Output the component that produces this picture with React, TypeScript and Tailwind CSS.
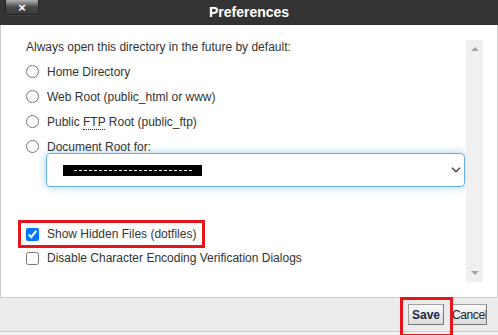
import { ChevronDown } from "lucide-react";

const font = { fontFamily: '"Liberation Sans", Arial, sans-serif' };

const RadioRow = ({ label, className = "h-[25px]" }: { label: React.ReactNode; className?: string }) => (
  <label className={`flex items-center gap-[8px] ${className}`}>
    <input type="radio" name="dir" className="w-[13px] h-[13px]" />
    <span>{label}</span>
  </label>
);

export default function App() {
  return (
    <div
      className="w-[498px] h-[335px] overflow-hidden bg-[#f2f2f2] text-[12px] text-[#333]"
      style={font}
    >
      {/* Title bar */}
      <div className="relative h-[25px] bg-[#333333] flex items-center justify-center">
        <button className="absolute left-[5px] top-0 w-[34px] h-[15px] rounded-b-[4px] border border-t-0 border-[#222] bg-gradient-to-b from-[#b4b4b4] via-[#4a4a4a] to-[#3a3a3a] flex items-center justify-center text-white font-bold text-[13px] leading-none shadow-[0_1px_0_#444]">
          ×
        </button>
        <div className="text-white font-bold text-[14px]">Preferences</div>
      </div>

      {/* Body */}
      <div className="h-[272px] bg-white flex border-l border-r border-[#cccccc]">
        <div className="flex-1 pl-[25px] pt-[10px]">
          <div className="h-[24px] flex items-center">Always open this directory in the future by default:</div>
          <RadioRow label="Home Directory" />
          <RadioRow label="Web Root (public_html or www)" />
          <RadioRow
            label={
              <>
                Public{" "}
                <abbr className="no-underline border-b border-dotted border-[#333]">FTP</abbr> Root (public_ftp)
              </>
            }
          />
          <RadioRow label="Document Root for:" className="h-[19px] pt-[6px]" />

          <div className="ml-[20px] mr-[1px] h-[34px] rounded-[4px] border border-[#66afe9] shadow-[0_0_8px_rgba(102,175,233,0.6)] flex items-center justify-between pl-[16px] pr-[1px]">
            <div className="w-[139px] h-[11px] bg-black flex items-center justify-center">
              <div className="w-[118px] border-t border-dashed border-white" />
            </div>
            <ChevronDown className="w-[14px] h-[14px] text-[#555]" strokeWidth={3} />
          </div>

          <label className="relative mt-[35px] h-[24px] flex items-center gap-[8px]">
            <input type="checkbox" defaultChecked className="w-[13px] h-[13px]" />
            <span>Show Hidden Files (dotfiles)</span>
            <span className="absolute left-[-8px] top-[-2px] w-[187px] h-[28px] border-[3px] border-[#e8141c]" />
          </label>
          <label className="h-[24px] flex items-center gap-[8px]">
            <input type="checkbox" className="w-[13px] h-[13px]" />
            <span>Disable Character Encoding Verification Dialogs</span>
          </label>
        </div>

        {/* Scrollbar */}
        <div className="w-[17px] mt-[15px] mb-[15px] bg-[#f0f0f0] flex flex-col items-center justify-between py-[7px]">
          <div className="w-0 h-0 border-l-[4px] border-r-[4px] border-b-[4px] border-l-transparent border-r-transparent border-b-[#a3a3a3]" />
          <div className="w-0 h-0 border-l-[4px] border-r-[4px] border-t-[4px] border-l-transparent border-r-transparent border-t-[#a3a3a3]" />
        </div>
        <div className="w-[14px]" />
      </div>

      {/* Footer */}
      <div className="h-[35px] bg-[#ececec] border-t border-b border-[#cccccc] flex items-center justify-end gap-[8px] pr-[11px]">
        <button className="relative w-[36px] h-[21px] border border-[#a0a0a0] border-r-[#777] border-b-[#777] bg-gradient-to-b from-[#fafafa] to-[#dcdcdc] font-bold text-[12px] text-[#1c2745] flex items-center justify-center">
          Save
          <span className="absolute left-[-9px] top-[-8px] w-[53px] h-[40px] border-[3px] border-[#e8141c]" />
        </button>
        <button className="w-[35px] h-[21px] border border-[#a0a0a0] border-r-[#777] border-b-[#777] bg-gradient-to-b from-[#fafafa] to-[#dcdcdc] text-[12px] text-[#222] flex items-center justify-center overflow-hidden whitespace-nowrap tracking-[-0.4px]">
          Cancel
        </button>
      </div>
    </div>
  );
}
